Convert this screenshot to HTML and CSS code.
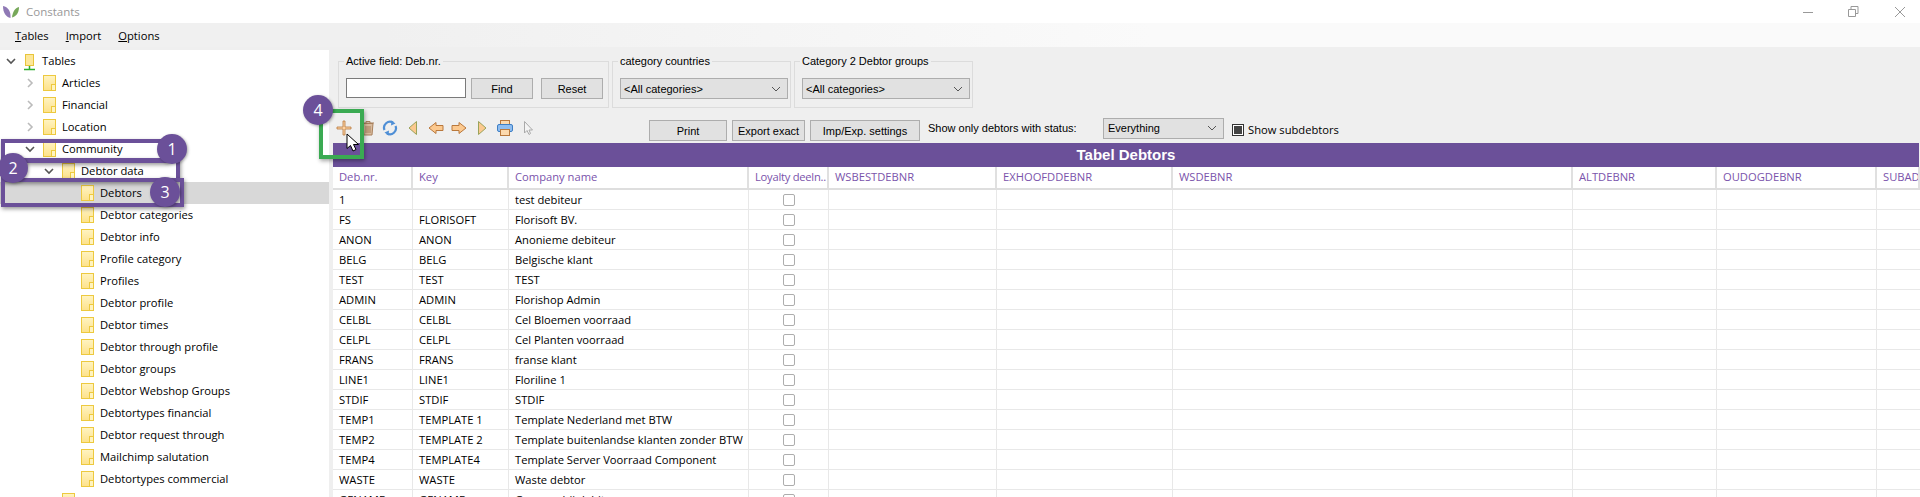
FILE: index.html
```html
<!DOCTYPE html>
<html lang="en">
<head>
  <meta charset="UTF-8" />
  <title>Constants</title>
  <link rel="stylesheet" href="styles.css">
</head>
<body>
<div class="window">

  <!-- TITLE BAR -->
  <div class="titlebar">
    <svg class="logo" width="18" height="12" viewBox="0 0 18 12">
      <path d="M1 0 C6 1 9 5 8.500 12 C4 11 1 7 1 0Z" fill="#8f79b5"/>
      <path d="M17 1 C13 2 10.500 6 10 11.500 C14 10.500 17 7 17 1Z" fill="#77a85a"/>
    </svg>
    <span class="title">Constants</span>
    <div class="win-controls">
      <svg width="12" height="12" viewBox="0 0 12 12"><path d="M1 6.500H11" stroke="#999" fill="none"/></svg>
      <svg width="12" height="12" viewBox="0 0 12 12"><path d="M.5 3.500H7.500V10.500H.5ZM3 3.500V.5H10V7.500H7.500" stroke="#999" fill="none"/></svg>
      <svg width="12" height="12" viewBox="0 0 12 12"><path d="M1 1L11 11M11 1L1 11" stroke="#999" fill="none"/></svg>
    </div>
  </div>

  <!-- MENU -->
  <div class="menubar">
    <span><u>T</u>ables</span>
    <span><u>I</u>mport</span>
    <span><u>O</u>ptions</span>
  </div>

  <div class="main">
    <!-- TREE -->
    <div class="tree">
      <div class="tree-row d0">
        <svg class="chev" viewBox="0 0 14 14"><path d="M3 5L7 9L11 5" stroke="#555" stroke-width="1.600" fill="none"/></svg>
        <svg class="root-icon" width="13" height="17" viewBox="0 0 13 17"><rect x="2.500" y=".5" width="8" height="11" fill="#fde79a" stroke="#e8c53a"/><path d="M6.500 12V15M1 15.500H12" stroke="#2fae2f" stroke-width="1.500"/></svg>
        <span>Tables</span>
      </div>
      <div class="tree-row d1"><svg class="chev" viewBox="0 0 14 14"><path d="M5 3L9 7L5 11" stroke="#bbb" stroke-width="1.600" fill="none"/></svg><i class="folder"></i><span>Articles</span></div>
      <div class="tree-row d1"><svg class="chev" viewBox="0 0 14 14"><path d="M5 3L9 7L5 11" stroke="#bbb" stroke-width="1.600" fill="none"/></svg><i class="folder"></i><span>Financial</span></div>
      <div class="tree-row d1"><svg class="chev" viewBox="0 0 14 14"><path d="M5 3L9 7L5 11" stroke="#bbb" stroke-width="1.600" fill="none"/></svg><i class="folder"></i><span>Location</span></div>
      <div class="tree-row d1"><svg class="chev" viewBox="0 0 14 14"><path d="M3 5L7 9L11 5" stroke="#555" stroke-width="1.600" fill="none"/></svg><i class="folder"></i><span>Community</span></div>
      <div class="tree-row d2"><svg class="chev" viewBox="0 0 14 14"><path d="M3 5L7 9L11 5" stroke="#555" stroke-width="1.600" fill="none"/></svg><i class="folder"></i><span>Debtor data</span></div>
      <div class="tree-row d3 selected"><i class="folder"></i><span>Debtors</span></div>
      <div class="tree-row d3"><i class="folder"></i><span>Debtor categories</span></div>
      <div class="tree-row d3"><i class="folder"></i><span>Debtor info</span></div>
      <div class="tree-row d3"><i class="folder"></i><span>Profile category</span></div>
      <div class="tree-row d3"><i class="folder"></i><span>Profiles</span></div>
      <div class="tree-row d3"><i class="folder"></i><span>Debtor profile</span></div>
      <div class="tree-row d3"><i class="folder"></i><span>Debtor times</span></div>
      <div class="tree-row d3"><i class="folder"></i><span>Debtor through profile</span></div>
      <div class="tree-row d3"><i class="folder"></i><span>Debtor groups</span></div>
      <div class="tree-row d3"><i class="folder"></i><span>Debtor Webshop Groups</span></div>
      <div class="tree-row d3"><i class="folder"></i><span>Debtortypes financial</span></div>
      <div class="tree-row d3"><i class="folder"></i><span>Debtor request through</span></div>
      <div class="tree-row d3"><i class="folder"></i><span>Mailchimp salutation</span></div>
      <div class="tree-row d3"><i class="folder"></i><span>Debtortypes commercial</span></div>
      <div class="tree-row d2 no-chev"><i class="folder"></i><span>General</span></div>
    </div>

    <!-- RIGHT PANE -->
    <div class="pane">
      <div class="filters">
        <fieldset class="group group-field">
          <legend>Active field: Deb.nr.</legend>
          <input class="field" type="text">
          <button class="btn btn-find">Find</button>
          <button class="btn btn-find">Reset</button>
        </fieldset>
        <fieldset class="group group-cat">
          <legend>category countries</legend>
          <div class="combo combo-cat">&lt;All categories&gt;<svg width="10" height="6" viewBox="0 0 10 6"><path d="M1 1L5 5L9 1" stroke="#555" fill="none"/></svg></div>
        </fieldset>
        <fieldset class="group group-cat">
          <legend>Category 2 Debtor groups</legend>
          <div class="combo combo-cat">&lt;All categories&gt;<svg width="10" height="6" viewBox="0 0 10 6"><path d="M1 1L5 5L9 1" stroke="#555" fill="none"/></svg></div>
        </fieldset>
      </div>

      <div class="toolbar">
        <div class="tools">
          <svg class="tool tool-first" viewBox="0 0 16 16"><path d="M7 1H9V7H15V9H9V15H7V9H1V7H7Z" fill="#fcd3a4" stroke="#b9783c" stroke-width=".8"/></svg>
          <svg class="tool tool-trash" viewBox="0 0 16 16"><path d="M2 3H14M6 3V1.500H10V3" stroke="#a9805c" fill="none"/><path d="M3 3.500H13L12 15H4Z" fill="#d9bc9f" stroke="#a9805c"/><path d="M6 6V13M8 6V13M10 6V13" stroke="#a9805c"/></svg>
          <svg class="tool" viewBox="0 0 16 16"><path d="M2.500 10A6 6 0 0 1 11 2.500M13.500 6A6 6 0 0 1 5 13.500" stroke="#4f8fd6" stroke-width="2.200" fill="none"/><path d="M9.500 .5L13.500 3.500L9 5.500ZM6.500 15.500L2.500 12.500L7 10.500Z" fill="#4f8fd6"/></svg>
          <svg class="tool" viewBox="0 0 16 16"><path d="M11.500 1.500V14.500L4 8Z" fill="#fcc98f" stroke="#9aa35a"/></svg>
          <svg class="tool" viewBox="0 0 16 16"><path d="M8 2.500V5.500H15V10.500H8V13.500L1 8Z" fill="#fcc98f" stroke="#b9783c"/></svg>
          <svg class="tool" viewBox="0 0 16 16"><path d="M8 2.500V5.500H1V10.500H8V13.500L15 8Z" fill="#fcc98f" stroke="#b9783c"/></svg>
          <svg class="tool" viewBox="0 0 16 16"><path d="M4.500 1.500V14.500L12 8Z" fill="#fcc98f" stroke="#9aa35a"/></svg>
          <svg class="tool" viewBox="0 0 16 16"><rect x="3.500" y=".5" width="9" height="4" fill="#fcd9ae" stroke="#b9783c"/><rect x=".5" y="4.500" width="15" height="7" rx="1.500" fill="#8fbdf0" stroke="#3f7fc4"/><rect x="3.500" y="9.500" width="9" height="6" fill="#fcd9ae" stroke="#b9783c"/></svg>
          <svg class="tool" viewBox="0 0 16 16"><path d="M4.500 1.500V13L7 10.500L9 14.500L10.500 13.500L9 10H12.500Z" fill="#f4f4f4" stroke="#aaa"/></svg>
        </div>
        <button class="btn btn-print">Print</button>
        <button class="btn btn-export">Export exact</button>
        <button class="btn btn-imp">Imp/Exp. settings</button>
        <span class="status-label">Show only debtors with status:</span>
        <div class="combo combo-status">Everything<svg width="10" height="6" viewBox="0 0 10 6"><path d="M1 1L5 5L9 1" stroke="#555" fill="none"/></svg></div>
        <label class="subdebtors"><i class="tri-check"></i>Show subdebtors</label>
      </div>

      <div class="grid-title">Tabel Debtors</div>

      <div class="grid">
        <div class="row head"><div>Deb.nr.</div><div>Key</div><div>Company name</div><div class="tight">Loyalty deeln..</div><div>WSBESTDEBNR</div><div>EXHOOFDDEBNR</div><div>WSDEBNR</div><div>ALTDEBNR</div><div>OUDOGDEBNR</div><div>SUBAD</div></div>
        <div class="row"><div>1</div><div></div><div>test debiteur</div><div class="c"><i class="check"></i></div><div></div><div></div><div></div><div></div><div></div><div></div></div>
        <div class="row"><div>FS</div><div>FLORISOFT</div><div>Florisoft BV.</div><div class="c"><i class="check"></i></div><div></div><div></div><div></div><div></div><div></div><div></div></div>
        <div class="row"><div>ANON</div><div>ANON</div><div>Anonieme debiteur</div><div class="c"><i class="check"></i></div><div></div><div></div><div></div><div></div><div></div><div></div></div>
        <div class="row"><div>BELG</div><div>BELG</div><div>Belgische klant</div><div class="c"><i class="check"></i></div><div></div><div></div><div></div><div></div><div></div><div></div></div>
        <div class="row"><div>TEST</div><div>TEST</div><div>TEST</div><div class="c"><i class="check"></i></div><div></div><div></div><div></div><div></div><div></div><div></div></div>
        <div class="row"><div>ADMIN</div><div>ADMIN</div><div>Florishop Admin</div><div class="c"><i class="check"></i></div><div></div><div></div><div></div><div></div><div></div><div></div></div>
        <div class="row"><div>CELBL</div><div>CELBL</div><div>Cel Bloemen voorraad</div><div class="c"><i class="check"></i></div><div></div><div></div><div></div><div></div><div></div><div></div></div>
        <div class="row"><div>CELPL</div><div>CELPL</div><div>Cel Planten voorraad</div><div class="c"><i class="check"></i></div><div></div><div></div><div></div><div></div><div></div><div></div></div>
        <div class="row"><div>FRANS</div><div>FRANS</div><div>franse klant</div><div class="c"><i class="check"></i></div><div></div><div></div><div></div><div></div><div></div><div></div></div>
        <div class="row"><div>LINE1</div><div>LINE1</div><div>Floriline 1</div><div class="c"><i class="check"></i></div><div></div><div></div><div></div><div></div><div></div><div></div></div>
        <div class="row"><div>STDIF</div><div>STDIF</div><div>STDIF</div><div class="c"><i class="check"></i></div><div></div><div></div><div></div><div></div><div></div><div></div></div>
        <div class="row"><div>TEMP1</div><div>TEMPLATE 1</div><div>Template Nederland met BTW</div><div class="c"><i class="check"></i></div><div></div><div></div><div></div><div></div><div></div><div></div></div>
        <div class="row"><div>TEMP2</div><div>TEMPLATE 2</div><div>Template buitenlandse klanten zonder BTW</div><div class="c"><i class="check"></i></div><div></div><div></div><div></div><div></div><div></div><div></div></div>
        <div class="row"><div>TEMP4</div><div>TEMPLATE4</div><div>Template Server Voorraad Component</div><div class="c"><i class="check"></i></div><div></div><div></div><div></div><div></div><div></div><div></div></div>
        <div class="row"><div>WASTE</div><div>WASTE</div><div>Waste debtor</div><div class="c"><i class="check"></i></div><div></div><div></div><div></div><div></div><div></div><div></div></div>
        <div class="row"><div>GENAME</div><div>GENAME</div><div>Genamp bij debiteur</div><div class="c"><i class="check"></i></div><div></div><div></div><div></div><div></div><div></div><div></div></div>
      </div>
    </div>
  </div>

  <!-- ANNOTATIONS -->
  <div class="mark mark-1"></div>
  <div class="mark mark-2"></div>
  <div class="mark mark-3"></div>
  <div class="mark-green"></div>
  <div class="badge badge-1">1</div>
  <div class="badge badge-2">2</div>
  <div class="badge badge-3">3</div>
  <div class="badge badge-4">4</div>
  <svg class="cursor" width="14" height="19" viewBox="0 0 14 19"><path d="M1 1V15.500L4.500 12.500L7 18L10 16.500L7.500 11.500H12.500Z" fill="#fff" stroke="#000"/></svg>
</div>
</body>
</html>
```

FILE: styles.css
```css
* {
  box-sizing: border-box;
}

html, body {
  margin: 0;
  padding: 0;
  height: 497px;
  overflow: hidden;
}

body {
  font-family: "Open Sans", "Noto Sans", sans-serif;
  font-size: 11.2px;
  color: #000;
  background: #fff;
}

.window {
  position: relative;
  width: 1920px;
  height: 497px;
  overflow: hidden;
}

/* title bar */
.titlebar {
  height: 23px;
  display: flex;
  align-items: center;
  padding-left: 2px;
  background: #fff;
}

.title {
  margin-left: 6px;
  font-size: 11.5px;
  color: #999;
}

.win-controls {
  margin-left: auto;
  margin-right: 14px;
  display: flex;
  gap: 34px;
}

/* menu */
.menubar {
  height: 24px;
  display: flex;
  align-items: center;
  gap: 17px;
  padding: 0 0 0 15px;
  background: linear-gradient(90deg, #f0f0f0 0%, #f0f0f0 20%, #fafafa 60%, #fafafa 100%);
}

.main {
  display: flex;
  height: 450px;
  background: #efefef;
}

/* tree */
.tree {
  width: 329px;
  flex: none;
  margin-top: 3px;
  background: #fff;
  overflow: hidden;
}

.tree-row {
  height: 22px;
  display: flex;
  align-items: center;
}

.tree-row span {
  margin-top: -2px;
}

.tree-row.selected {
  background: #d8d8d8;
}

.d0 { padding-left: 4px; }
.d1 { padding-left: 23px; }
.d2 { padding-left: 42px; }
.d3 { padding-left: 81px; }
.d2.no-chev { padding-left: 62px; }

.chev {
  width: 14px;
  height: 14px;
  margin-right: 6px;
  flex: none;
}

.tree-row .root-icon {
  margin: 2px 6px 0 -1px;
  flex: none;
}

.folder {
  display: block;
  position: relative;
  width: 13px;
  height: 16px;
  margin-right: 6px;
  flex: none;
  border: 1px solid #edc93f;
  background: linear-gradient(180deg, #fff3c0, #fde28c);
}

.folder::after {
  content: "";
  position: absolute;
  right: -1px;
  bottom: -1px;
  width: 3px;
  height: 5px;
  border: 1px solid #edc93f;
  background: #fff3c0;
}

/* right pane */
.pane {
  flex: 1;
  min-width: 0;
  padding-left: 4px;
}

.filters {
  display: flex;
  gap: 3px;
  height: 63px;
  padding-left: 5px;
  font-family: "Liberation Sans", Arial, sans-serif;
  font-size: 11px;
}

.group {
  margin: 6px 0 0;
  padding: 0 0 0 5px;
  height: 55px;
  border: 1px solid #dcdcdc;
  display: flex;
  align-items: flex-start;
}

.group legend {
  padding: 0 2px;
  line-height: 16px;
}

.group-field {
  width: 271px;
  gap: 5px;
}

.group-field .btn-find:last-child {
  margin-left: 3px;
}

.group-cat {
  width: 179px;
}

.field {
  width: 120px;
  height: 20px;
  margin: 9px 0 0 2px;
  border: 1px solid #7a7a7a;
  background: #fff;
}

.btn {
  height: 21px;
  padding: 0;
  border: 1px solid #adadad;
  background: #e1e1e1;
  font: inherit;
  color: #000;
}

.btn-find {
  width: 62px;
  margin-top: 9px;
}

.combo {
  height: 21px;
  display: flex;
  align-items: center;
  justify-content: space-between;
  padding: 0 6px 0 3px;
  border: 1px solid #adadad;
  background: #e1e1e1;
}

.combo-cat {
  width: 168px;
  margin: 9px 0 0 2px;
}

.toolbar {
  display: flex;
  align-items: center;
  height: 33px;
  padding-top: 3px;
  font-family: "Liberation Sans", Arial, sans-serif;
  font-size: 11px;
}

.tools {
  display: flex;
  align-items: center;
  width: 316px;
  flex: none;
}

.tool {
  width: 16px;
  height: 16px;
  margin: 0 3.500px;
  flex: none;
}

.tool-first {
  margin-left: 3px;
}

.tool-trash {
  margin-left: 4.500px;
  margin-right: 2.500px;
}

.toolbar .btn {
  margin-top: 5px;
}

.btn-print { width: 78px; }
.toolbar .btn-export { width: 73px; margin-left: 5px; }
.toolbar .btn-imp { width: 110px; margin-left: 5px; }

.status-label {
  width: 175px;
  margin-left: 8px;
  margin-top: -1px;
}

.combo-status {
  width: 121px;
  padding-left: 4px;
}

.subdebtors {
  display: flex;
  align-items: center;
  margin-left: 8px;
  margin-top: 3px;
  font-family: "Open Sans", "Noto Sans", sans-serif;
  font-size: 11.2px;
}

.tri-check {
  width: 12px;
  height: 12px;
  margin-right: 4px;
  border: 1px solid #333;
  background: #fff;
  box-shadow: inset 0 0 0 1px #fff, inset 0 0 0 6px #444;
}

/* grid */
.grid-title {
  height: 24px;
  margin-right: 1px;
  background: #6b5099;
  color: #fff;
  font: bold 15px/24px "Liberation Sans", Arial, sans-serif;
  text-align: center;
}

.grid {
  background: #fff;
  height: 330px;
  overflow: hidden;
}

.row {
  display: grid;
  grid-template-columns: 80px 96px 240px 80px 168px 176px 400px 144px 160px 43px;
  height: 20px;
  border-bottom: 1px solid #e8e8e8;
}

.row > div {
  padding-left: 6px;
  line-height: 19px;
  white-space: nowrap;
  overflow: hidden;
  border-right: 1px solid #e8e8e8;
}

.row > div:last-child {
  border-right: 0;
}

.row.head {
  height: 23px;
  border-bottom: 2px solid #dedede;
  color: #7a53ab;
}

.row.head > div {
  line-height: 19px;
  border-right: 2px solid #e0e0e0;
}

.row.head > .tight {
  letter-spacing: -0.25px;
}

.row > .c {
  display: flex;
  align-items: center;
  justify-content: center;
  padding-left: 0;
}

.check {
  display: block;
  width: 12px;
  height: 12px;
  border: 1px solid #adadad;
  border-radius: 2px;
  background: #fff;
}

/* annotations */
.mark {
  position: absolute;
  left: 1px;
  border: 4px solid #6b5099;
  box-shadow: 1px 2px 4px rgba(0,0,0,0.4);
}

.mark-1 { top: 139px; width: 168px; height: 24px; }
.mark-2 { top: 158px; width: 179px; height: 24px; }
.mark-3 { top: 178px; width: 183px; height: 29px; }

.mark-green {
  position: absolute;
  left: 319px;
  top: 109px;
  width: 45px;
  height: 50px;
  border: 4px solid #3aaa52;
  box-shadow: 1px 2px 4px rgba(0,0,0,0.35);
}

.badge {
  position: absolute;
  width: 30px;
  height: 30px;
  border-radius: 50%;
  background: #6b5099;
  color: #fff;
  font: 16px/30px "Open Sans", sans-serif;
  text-align: center;
  box-shadow: 1px 1px 3px rgba(0,0,0,0.35);
}

.badge-1 { left: 157px; top: 134px; }
.badge-2 { left: -2px; top: 153px; }
.badge-3 { left: 150px; top: 177px; }
.badge-4 { left: 303px; top: 95px; }

.cursor {
  position: absolute;
  left: 346px;
  top: 133px;
}
```
